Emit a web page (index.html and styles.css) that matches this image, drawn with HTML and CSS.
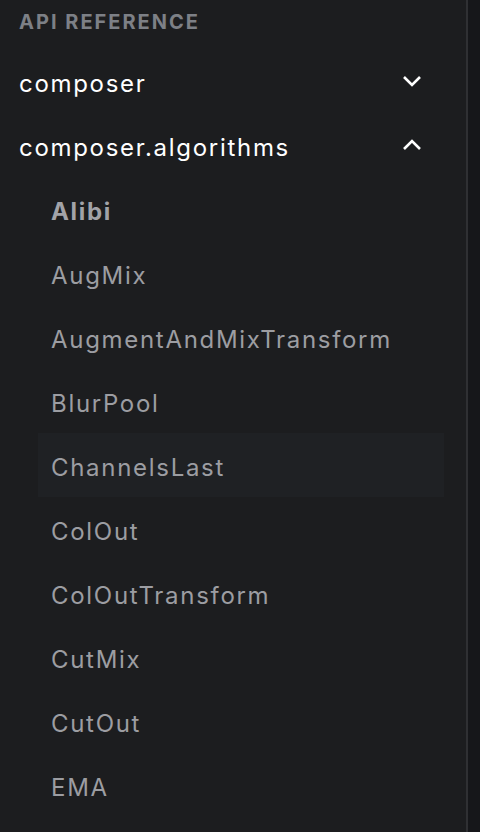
FILE: index.html
```html
<!DOCTYPE html>
<html>
<head>
<meta charset="utf-8">
<link rel="stylesheet" href="styles.css">
</head>
<body>
<div class="layout">
  <nav class="sidebar">
    <div class="caption">API REFERENCE</div>
    <ul class="tree">
      <li class="top">
        <span class="label">composer</span>
        <svg class="chev" width="20" height="12" viewBox="0 0 20 12"><polyline points="2,2 10,10 18,2" fill="none" stroke="#fff" stroke-width="2.6" stroke-linecap="butt" stroke-linejoin="miter"/></svg>
      </li>
      <li class="top">
        <span class="label">composer.algorithms</span>
        <svg class="chev" width="20" height="12" viewBox="0 0 20 12"><polyline points="2,10 10,2 18,10" fill="none" stroke="#fff" stroke-width="2.6" stroke-linecap="butt" stroke-linejoin="miter"/></svg>
      </li>
      <li class="child current">Alibi</li>
      <li class="child">AugMix</li>
      <li class="child">AugmentAndMixTransform</li>
      <li class="child">BlurPool</li>
      <li class="child hover">ChannelsLast</li>
      <li class="child">ColOut</li>
      <li class="child">ColOutTransform</li>
      <li class="child">CutMix</li>
      <li class="child">CutOut</li>
      <li class="child">EMA</li>
    </ul>
  </nav>
  <div class="rest"></div>
</div>
</body>
</html>
```
FILE: styles.css
```css
html, body {
  margin: 0;
  padding: 0;
  background: #1c1d1f;
  height: 100%;
  overflow: hidden;
}
body {
  font-family: Inter, "Noto Sans", sans-serif;
}
.layout {
  display: flex;
  height: 832px;
}
.sidebar {
  width: 466px;
  flex: none;
  border-right: 2px solid #2f3033;
  box-sizing: content-box;
}
.rest {
  flex: 1;
  background: #16171a;
}
.caption {
  height: 49px;
  box-sizing: border-box;
  padding: 10px 0 0 19px;
  font-size: 20px;
  line-height: 24px;
  font-weight: 700;
  letter-spacing: 2px;
  color: #7d8086;
}
.tree {
  list-style: none;
  margin: 0;
  padding: 0;
}
.tree li {
  height: 64px;
  box-sizing: border-box;
  padding-top: 6px;
  line-height: 58px;
  font-size: 24px;
  letter-spacing: 1.7px;
  white-space: nowrap;
}
.top {
  display: flex;
  align-items: center;
  padding-left: 19px;
  padding-right: 44px;
  color: #ffffff;
}
.top .label {
  flex: 1;
}
.chev {
  display: block;
  margin-top: -6px;
}
.child {
  margin-left: 38px;
  margin-right: 22px;
  padding-left: 13px;
  color: #9c9da2;
}
.child.current {
  font-weight: 700;
  color: #a2a3a8;
}
.child.hover {
  background: #1f2124;
}
```
